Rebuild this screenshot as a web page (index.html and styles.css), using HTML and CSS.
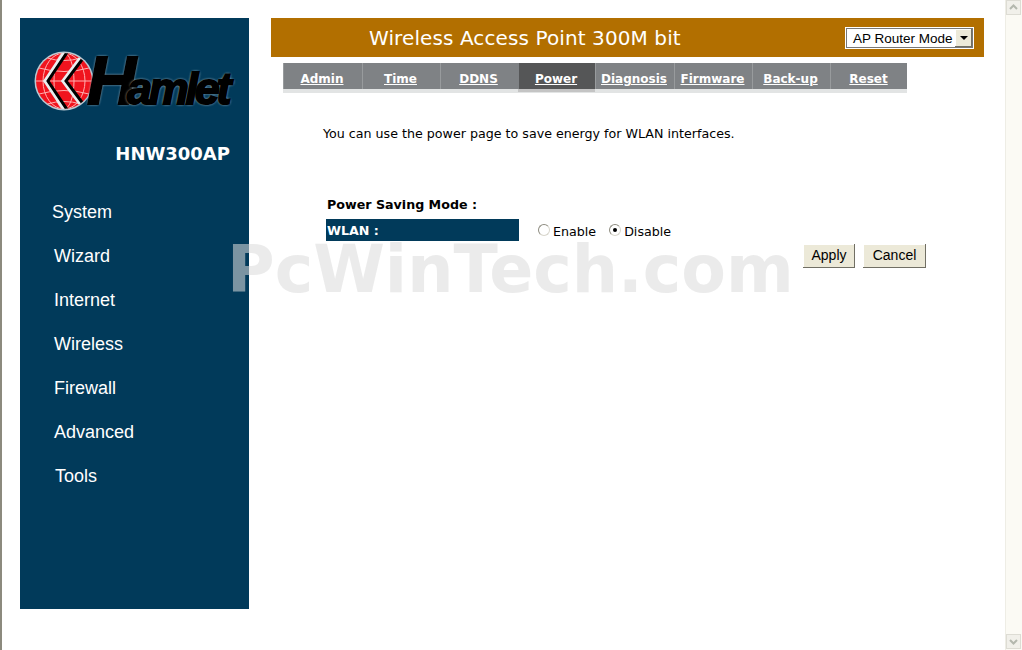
FILE: index.html
```html
<!DOCTYPE html>
<html>
<head>
  <title>Wireless Access Point 300M bit</title>
  <link rel="stylesheet" href="styles.css">
</head>

<body>

<div class='window'>
  <div class='page'>
    <div class='sidebar'>
      <div class='logo'>
        <svg class='globe' width='62' height='64' viewBox='0 0 62 64'>
          <defs>
            <clipPath id='ball'><circle cx='31' cy='32' r='28'/></clipPath>
          </defs>
          <circle cx='31' cy='32' r='29.5' fill='#b9c9d2'/>
          <circle cx='31' cy='32' r='28' fill='#f0141e'/>
          <g clip-path='url(#ball)' fill='none' stroke='#ffb0b0' stroke-width='1'>
            <ellipse cx='31' cy='32' rx='10' ry='28'/>
            <ellipse cx='31' cy='32' rx='21' ry='28'/>
            <path d='M3 32H59M6 19Q31 26 56 19M6 45Q31 38 56 45M14 9Q31 14 48 9M14 55Q31 50 48 55'/>
          </g>
          <g clip-path='url(#ball)' fill='none'>
            <path d='M33 2 13 32 33 62' stroke='#e8eef0' stroke-width='5'/>
            <path d='M35 2 15 32 35 62' stroke='#000' stroke-width='3'/>
            <path d='M52 4 31 32 52 60' stroke='#e8eef0' stroke-width='5'/>
            <path d='M54 4 33 32 54 60' stroke='#000' stroke-width='3'/>
          </g>
        </svg>
        <span class='brand'><span class='brand-h'>H</span>amlet</span>
      </div>
      <div class='model'>HNW300AP</div>
      <ul class='menu'>
        <li class='back'>System</li>
        <li>Wizard</li>
        <li>Internet</li>
        <li>Wireless</li>
        <li>Firewall</li>
        <li>Advanced</li>
        <li class='fwd'>Tools</li>
      </ul>
    </div>

    <div class='main'>
      <div class='header'>
        <h1>Wireless Access Point 300M bit</h1>
        <div class='select'>
          <span class='select-text'>AP Router Mode</span>
          <span class='select-btn'><i></i></span>
        </div>
      </div>

      <div class='tabs'>
        <a class='tab'>Admin</a>
        <a class='tab'>Time</a>
        <a class='tab'>DDNS</a>
        <a class='tab active'>Power</a>
        <a class='tab'>Diagnosis</a>
        <a class='tab'>Firmware</a>
        <a class='tab'>Back-up</a>
        <a class='tab'>Reset</a>
      </div>

      <div class='content'>
        <p class='intro'>You can use the power page to save energy for WLAN interfaces.</p>
        <div class='section-title'>Power Saving Mode :</div>
        <div class='row'>
          <div class='label'>WLAN :</div>
          <label class='radio'><input type='radio' name='wlan'>Enable</label>
          <label class='radio'><input type='radio' name='wlan' checked>Disable</label>
        </div>
        <div class='buttons'>
          <button>Apply</button>
          <button class='cancel'>Cancel</button>
        </div>
      </div>
    </div>

    <div class='watermark'>PcWinTech.com</div>
  </div>

  <div class='scrollbar'>
    <div class='arrow'><svg width='15' height='15' viewBox='0 0 15 15'><path d='M4 9 7.500 5.500 11 9' fill='none' stroke='#b4b8ae' stroke-width='2'/></svg></div>
    <div class='arrow'><svg width='15' height='15' viewBox='0 0 15 15'><path d='M4 6 7.500 9.500 11 6' fill='none' stroke='#b4b8ae' stroke-width='2'/></svg></div>
  </div>
</div>

</body>
</html>
```

FILE: styles.css
```css
html, body {
  margin: 0;
  background: #fff;
  overflow: hidden;
}
body {
  font-family: 'DejaVu Sans', sans-serif;
  color: #000;
}
.window {
  display: flex;
  height: 650px;
  border-left: 2px solid #8c8a7e;
}
.page {
  position: relative;
  flex: 1;
  display: flex;
  gap: 22px;
  padding: 18px 0 0 18px;
}
.scrollbar {
  width: 17px;
  display: flex;
  flex-direction: column;
  justify-content: space-between;
  background: #fbfaf4;
  border-left: 1px solid #eeede5;
  box-sizing: border-box;
}
.arrow {
  width: 15px;
  height: 15px;
  margin: 0 1px 1px 0;
  background: #f1f0ea;
  border: 1px solid #dddcd4;
  box-sizing: border-box;
  overflow: hidden;
}
.arrow svg {
  display: block;
  margin: -1px;
}

/* left column */
.sidebar {
  width: 229px;
  height: 591px;
  background: #013a5a;
  color: #fff;
}
.logo {
  display: flex;
  align-items: flex-start;
  padding: 31px 0 0 13px;
  height: 62px;
}
.globe {
  flex: none;
}
.brand {
  margin: -4px 0 0 -8px;
  font-family: 'Liberation Sans', sans-serif;
  font-size: 45px;
  line-height: 70px;
  font-weight: bold;
  font-style: italic;
  letter-spacing: -3.3px;
  color: #000;
  white-space: nowrap;
  -webkit-text-stroke: 2px #000;
  text-shadow: 0 0 3px #b9c9d2, 0 0 3px #b9c9d2;
}
.brand-h {
  font-size: 68px;
  letter-spacing: -9px;
}
.model {
  margin-top: 33px;
  padding-right: 19px;
  text-align: right;
  font-size: 18px;
  line-height: 20px;
  font-weight: bold;
}
.menu {
  list-style: none;
  margin: 26px 0 0;
  padding: 0 0 0 34px;
  font-family: 'Liberation Sans', sans-serif;
  font-size: 18px;
}
.menu li {
  height: 44px;
  line-height: 44px;
}
.menu .back {
  margin-left: -2px;
}
.menu .fwd {
  margin-left: 1px;
}

/* right column */
.main {
  width: 713px;
}
.header {
  display: flex;
  align-items: center;
  justify-content: space-between;
  height: 39px;
  padding: 0 10px 0 98px;
  background: #b26f00;
  color: #fff;
}
.header h1 {
  margin: 0;
  font-size: 20px;
  font-weight: normal;
  letter-spacing: .1px;
}
.select {
  display: flex;
  align-items: center;
  box-sizing: border-box;
  width: 129px;
  height: 22px;
  padding: 1px 1px 1px 7px;
  background: #fff;
  border: 1px solid #fff;
  outline: 1px solid #777;
  outline-offset: -2px;
  color: #000;
  font-family: 'Liberation Sans', sans-serif;
  font-size: 13.5px;
  white-space: nowrap;
}
.select-text {
  flex: 1;
  padding-top: 1px;
}
.select-btn {
  display: flex;
  align-items: center;
  justify-content: center;
  width: 17px;
  height: 18px;
  background: #ece9d8;
  box-shadow: inset -1px -1px 0 #716f64, inset 1px 1px 0 #fff;
}
.select-btn i {
  border: 4px solid transparent;
  border-top: 4px solid #000;
  border-bottom: 0;
}
.tabs {
  display: flex;
  width: 624px;
  height: 26px;
  margin: 6px 0 4px 12px;
  background: #7f8285;
  box-shadow: 0 4px 0 #e2e4e4;
}
.tab {
  flex: 0 0 78px;
  box-sizing: border-box;
  padding: 1px 2px 0 0;
  border-left: 1px solid #989b9d;
  text-align: center;
  color: #fff;
  font-size: 12px;
  line-height: 30px;
  font-weight: bold;
  text-decoration: underline;
}
.tab:first-child {
  flex-basis: 79px;
}
.tab:nth-child(5) {
  flex-basis: 79px;
}
.tab.active {
  flex-basis: 77px;
  background: #555657;
  border-left-color: #7f8285;
  box-shadow: 0 3px 0 #c4c4c4;
}
.content {
  padding-left: 52px;
  font-size: 12.66px;
}
.intro {
  margin: 0;
  padding-top: 33px;
  line-height: 16px;
}
.section-title {
  margin: 55px 0 0 4px;
  font-weight: bold;
  line-height: 16px;
}
.row {
  display: flex;
  align-items: center;
  margin: 6px 0 0 3px;
  height: 22px;
}
.label {
  box-sizing: border-box;
  width: 193px;
  height: 22px;
  padding-left: 1px;
  background: #013a5a;
  color: #fff;
  font-weight: bold;
  line-height: 23px;
}
.radio {
  display: flex;
  align-items: center;
  margin: 2px 0 0 19px;
}
.radio + .radio {
  margin-left: 13px;
}
.radio input {
  appearance: none;
  width: 12px;
  height: 12px;
  margin: -2px 3px 0 0;
  border-radius: 50%;
  background: #fff;
  border: 1px solid #8e8c80;
  border-right-color: #d8d6cc;
  border-bottom-color: #d8d6cc;
  box-sizing: border-box;
  display: flex;
  align-items: center;
  justify-content: center;
}
.radio input:checked::after {
  content: '';
  width: 4px;
  height: 4px;
  border-radius: 50%;
  background: #000;
}
.buttons {
  display: flex;
  gap: 8px;
  margin: 3px 0 0 480px;
}
.buttons button {
  box-sizing: border-box;
  width: 52px;
  height: 24px;
  padding: 0 0 2px;
  background: #ece9d8;
  border: 0;
  box-shadow: inset -1px -1px 0 #716f64, inset 1px 1px 0 #fff;
  color: #000;
  font-family: 'Liberation Sans', sans-serif;
  font-size: 14px;
}
.buttons .cancel {
  width: 63px;
}

.watermark {
  position: absolute;
  left: 225px;
  top: 244px;
  color: rgba(220, 220, 220, .56);
  font-size: 65px;
  line-height: 52px;
  font-weight: bold;
  white-space: nowrap;
  pointer-events: none;
}
```
